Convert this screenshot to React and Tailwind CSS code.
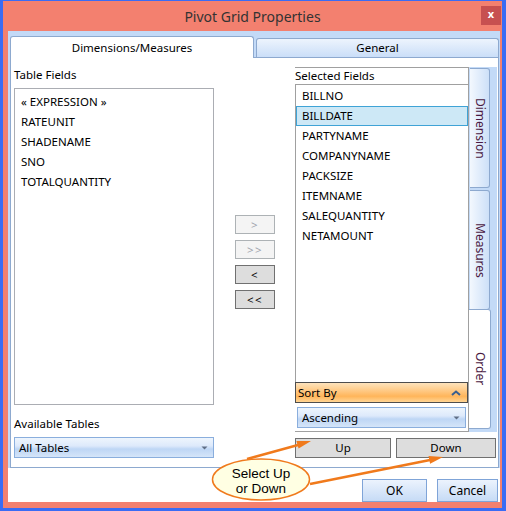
import React from "react";

const tableFields = ["« EXPRESSION »", "RATEUNIT", "SHADENAME", "SNO", "TOTALQUANTITY"];
const selectedFields = ["BILLNO", "BILLDATE", "PARTYNAME", "COMPANYNAME", "PACKSIZE", "ITEMNAME", "SALEQUANTITY", "NETAMOUNT"];

function ComboArrow() {
  return (
    <svg width="7" height="4" viewBox="0 0 7 4" className="shrink-0">
      <path d="M0.5 0.5 L6.5 0.5 L3.5 3.5 Z" fill="#5F6E86" />
    </svg>
  );
}

function Combo({ label, className }) {
  return (
    <div className={`flex h-[21px] items-center justify-between border border-[#8AAEDD] bg-[linear-gradient(to_bottom,#eef5fd_0%,#dde9fb_42%,#bed6f5_58%,#d5e5f9_100%)] pl-[4px] pr-[5px] ${className}`}>
      <span>{label}</span>
      <ComboArrow />
    </div>
  );
}

function SideButton({ label, enabled }) {
  return enabled ? (
    <div className="flex h-[19px] w-[40px] items-center justify-center border border-[#707070] bg-[#DDDDDD] tracking-[1.5px] text-black">{label}</div>
  ) : (
    <div className="flex h-[19px] w-[40px] items-center justify-center border border-[#ADB2B5] bg-[#F4F4F4] tracking-[1.5px] text-[#9DA3AC]">{label}</div>
  );
}

function VTab({ label, selected, className }) {
  return (
    <div
      className={`flex h-[120px] items-center justify-center rounded-r-[3px] border border-l-0 border-[#8DA9CF] ${selected ? "w-[22px] bg-white" : "ml-px w-[20px] bg-[linear-gradient(to_right,#f3f8fe,#cde0f8)]"} ${className}`}
    >
      <span className="text-[12px] text-[#4A1942] [writing-mode:vertical-rl]">{label}</span>
    </div>
  );
}

export default function App() {
  return (
    <div className="relative h-[511px] w-[506px] overflow-hidden bg-[#3A6CF4] pb-[3px] pl-[3px] pr-[4px] pt-px font-['Noto_Sans',sans-serif] text-[11.5px] text-black">
      <div className="flex h-full flex-col bg-[#F3806F]">
        {/* title bar */}
        <div className="flex h-[30px] shrink-0">
          <div className="w-[21px]" />
          <div className="flex flex-1 items-center justify-center text-[14px] text-[#333]">Pivot Grid Properties</div>
          <div className="mr-[1px] mt-[5px] flex h-[19px] w-[20px] items-center justify-center bg-[#C75050] pb-[2px] text-[11px] font-bold text-white">x</div>
        </div>

        {/* client */}
        <div className="mb-[6px] ml-[5px] mr-[2px] flex flex-1 flex-col bg-white">
          <div className="flex h-[437px] flex-col bg-[#C3DAF7] pl-[2px] pr-px pt-[5px]">
            <div className="flex h-[21px] items-end gap-[2px]">
              <div className="relative z-10 -mb-px flex h-[22px] w-[244px] items-center justify-center rounded-t-[3px] border border-b-0 border-[#8DA9CF] bg-white">Dimensions/Measures</div>
              <div className="flex h-[19px] flex-1 items-center justify-center rounded-t-[3px] border border-b-0 border-[#8DA9CF] bg-[linear-gradient(to_bottom,#edf4fd,#cadef8)]">General</div>
            </div>

            <div className="flex flex-1 border border-[#8DA9CF] bg-white">
              {/* left column */}
              <div className="ml-[3px] flex w-[200px] flex-col">
                <div className="mt-[9px] h-[16px] leading-[16px]">Table Fields</div>
                <div className="mt-[5px] h-[317px] border border-[#ABADB3] pl-[6px] pt-[3px]">
                  {tableFields.map((f) => (
                    <div key={f} className="h-[20px] leading-[20px]">{f}</div>
                  ))}
                </div>
                <div className="mt-[11px] h-[16px] leading-[16px]">Available Tables</div>
                <Combo label="All Tables" className="mt-[5px] h-[20px]" />
              </div>

              {/* move buttons */}
              <div className="flex w-[81px] flex-col gap-[6px] pl-[21px] pt-[157px]">
                <SideButton label=">" />
                <SideButton label=">>" />
                <SideButton label="<" enabled />
                <SideButton label="<<" enabled />
              </div>

              {/* right column */}
              <div className="mt-[9px] flex w-[202px] flex-col">
                <div className="flex h-[365px]">
                  <div className="flex w-[174px] flex-col border-b border-r border-t border-[#A0A0A0]">
                    <div className="h-[16px] leading-[16px]">Selected Fields</div>
                    <div className="h-[298px] border-l border-t border-[#A0A0A0] pt-px">
                      {selectedFields.map((f) => (
                        <div
                          key={f}
                          className={`h-[20px] border pl-[5px] leading-[18px] ${f === "BILLDATE" ? "border-[#3FA3D6] bg-[#CDE8F6]" : "border-transparent"}`}
                        >
                          {f}
                        </div>
                      ))}
                    </div>
                    <div className="flex h-[21px] items-center justify-between border border-[#4D4D4D] bg-[linear-gradient(to_bottom,#fde3bc_0%,#ffc67e_45%,#ffb55a_70%,#ffd595_100%)] pl-[2px] pr-[6px]">
                      <span>Sort By</span>
                      <svg width="10" height="6" viewBox="0 0 10 6">
                        <path d="M1 5 L5 1.5 L9 5" fill="none" stroke="#3A5F8F" strokeWidth="2" />
                      </svg>
                    </div>
                    <div className="h-[28px] px-[2px] pt-[4px]">
                      <Combo label="Ascending" />
                    </div>
                  </div>
                  <div className="flex w-[28px] flex-col bg-[#C3DAF7] pt-px">
                    <VTab label="Dimension" />
                    <VTab label="Measures" className="mt-[2px]" />
                    <VTab label="Order" selected className="-mt-px" />
                  </div>
                </div>
                <div className="mt-[6px] flex h-[20px] gap-[5px]">
                  <div className="flex w-[96px] items-center justify-center border border-[#707070] bg-[#DDDDDD]">Up</div>
                  <div className="flex w-[100px] items-center justify-center border border-[#707070] bg-[#DDDDDD]">Down</div>
                </div>
              </div>
            </div>
          </div>

          <div className="flex justify-end gap-[10px] pr-[2px] pt-[11px]">
            <div className="flex h-[23px] w-[65px] items-center justify-center border border-[#7FA4D8] bg-[linear-gradient(to_bottom,#ecf3fd,#c6dbf6)] text-[12px]">OK</div>
            <div className="flex h-[23px] w-[61px] items-center justify-center border border-[#7FA4D8] bg-[linear-gradient(to_bottom,#ecf3fd,#c6dbf6)] text-[12px]">Cancel</div>
          </div>
        </div>
      </div>

      {/* callout annotation */}
      <svg className="pointer-events-none absolute left-0 top-0" width="506" height="511" viewBox="0 0 506 511">
        <line x1="247" y1="459" x2="298" y2="445" stroke="#F07A1C" strokeWidth="2.5" />
        <polygon points="311,441 298.6,448.6 296.4,441" fill="#F07A1C" />
        <line x1="310" y1="484" x2="430" y2="460" stroke="#F07A1C" strokeWidth="2.5" />
        <polygon points="443,457 430.1,463.7 428.5,455.9" fill="#F07A1C" />
        <ellipse cx="261" cy="479.5" rx="48.5" ry="20.5" fill="#FFFFE3" stroke="#F07A1C" strokeWidth="1.5" />
      </svg>
      <div className="pointer-events-none absolute left-[212px] top-[466px] w-[98px] text-center font-['Liberation_Sans',Arial,sans-serif] text-[13.5px] leading-[15px] text-black">
        Select Up
        <br />
        or Down
      </div>
    </div>
  );
}
